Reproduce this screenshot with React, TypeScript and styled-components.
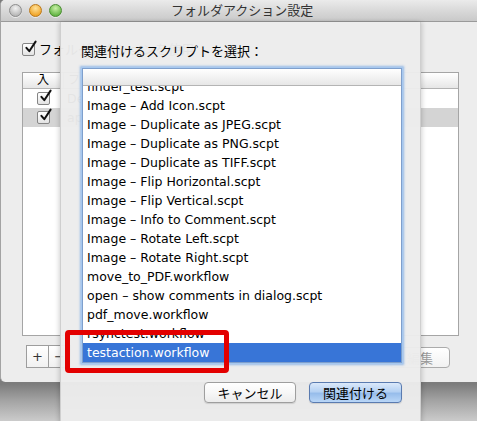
import * as React from "react";
import styled, { createGlobalStyle } from "styled-components";

const FONT = `"DejaVu Sans", "Noto Sans CJK JP", sans-serif`;

const GlobalStyle = createGlobalStyle`
  html, body {
    margin: 0;
    padding: 0;
  }
  body {
    font-family: ${FONT};
    font-size: 13px;
    color: #000;
  }
`;

const scripts = [
  "finder_test.scpt",
  "Image – Add Icon.scpt",
  "Image – Duplicate as JPEG.scpt",
  "Image – Duplicate as PNG.scpt",
  "Image – Duplicate as TIFF.scpt",
  "Image – Flip Horizontal.scpt",
  "Image – Flip Vertical.scpt",
  "Image – Info to Comment.scpt",
  "Image – Rotate Left.scpt",
  "Image – Rotate Right.scpt",
  "move_to_PDF.workflow",
  "open – show comments in dialog.scpt",
  "pdf_move.workflow",
  "rsynctest.workflow",
  "testaction.workflow",
];

const CheckMark = () => (
  <svg width="15" height="15" viewBox="0 0 15 15">
    <path
      d="M3.4 7.8 L6.3 11.2 L12.6 1.6"
      fill="none"
      stroke="#111"
      strokeWidth="2"
      strokeLinecap="round"
      strokeLinejoin="round"
    />
  </svg>
);

const CheckBox = () => (
  <CheckFrame>
    <CheckGlyph>
      <CheckMark />
    </CheckGlyph>
  </CheckFrame>
);

const App = () => {
  return (
    <>
      <GlobalStyle />
      <Screen>
        <Window>
          <TitleBar>
            <Lights>
              <Light $tone="gray" />
              <Light $tone="orange" />
              <Light $tone="green" />
            </Lights>
            <Title>フォルダアクション設定</Title>
          </TitleBar>
          <WindowBody>
            <CheckRow>
              <CheckBox />
              <span>フォルダアクションを使用</span>
            </CheckRow>
            <FolderTable>
              <TableHeader>
                <HeadCell $w={40}>入</HeadCell>
                <HeadCell $left>フォルダ</HeadCell>
              </TableHeader>
              <TableRow>
                <ToggleCell>
                  <CheckBox />
                </ToggleCell>
                <NameCell>Desktop</NameCell>
              </TableRow>
              <TableRow $selected>
                <ToggleCell>
                  <CheckBox />
                </ToggleCell>
                <NameCell>applescript</NameCell>
              </TableRow>
            </FolderTable>
            <BottomBar>
              <SegGroup>
                <SegButton>+</SegButton>
                <SegButton>−</SegButton>
              </SegGroup>
              <EditButton>編集</EditButton>
            </BottomBar>
          </WindowBody>
        </Window>

        <Sheet>
          <SheetLabel>関連付けるスクリプトを選択：</SheetLabel>
          <ListBox>
            <ListHeader />
            <ListBody>
              <ListRows>
                {scripts.map((s, i) => (
                  <ListRow key={s} $selected={i === scripts.length - 1}>
                    {s}
                  </ListRow>
                ))}
              </ListRows>
            </ListBody>
          </ListBox>
          <SheetButtons>
            <PushButton>キャンセル</PushButton>
            <PushButton $primary>関連付ける</PushButton>
          </SheetButtons>
        </Sheet>

        <Highlight />
      </Screen>
    </>
  );
};

export default App;

const Screen = styled.div`
  position: relative;
  width: 477px;
  height: 421px;
  overflow: hidden;
  background: linear-gradient(
    to bottom,
    #7c7c7c 0,
    #7c7c7c 384px,
    #a2a2a2 400px,
    #cbcbcb 421px
  );
`;

const Window = styled.div`
  width: 520px;
  height: 382px;
  background: #ededed;
  border-left: 1px solid #a3a3a3;
  border-radius: 5px;
  overflow: hidden;
  box-sizing: border-box;
`;

const TitleBar = styled.div`
  position: relative;
  display: flex;
  align-items: center;
  height: 22px;
  box-sizing: border-box;
  background: linear-gradient(to bottom, #ebebeb 0%, #d9d9d9 50%, #c9c9c9 100%);
  border-bottom: 1px solid #9a9a9a;
`;

const Lights = styled.div`
  display: flex;
  gap: 7px;
  padding-left: 8px;
`;

const toneMap = {
  gray: ["#f2f2f2", "#b8b8b8", "#8d8d8d"],
  orange: ["#ffe29a", "#f0a52a", "#b9781c"],
  green: ["#c9f0a6", "#64b646", "#4a8b32"],
};

const Light = styled.div<{ $tone: keyof typeof toneMap }>`
  width: 13px;
  height: 13px;
  border-radius: 50%;
  box-sizing: border-box;
  border: 1px solid ${(p) => toneMap[p.$tone][2]};
  background: radial-gradient(
    circle at 50% 30%,
    ${(p) => toneMap[p.$tone][0]} 0%,
    ${(p) => toneMap[p.$tone][1]} 75%
  );
  box-shadow: 0 1px 0 rgba(255, 255, 255, 0.6);
`;

const Title = styled.div`
  position: absolute;
  left: 170px;
  top: 3px;
  font-size: 13px;
  line-height: 16px;
  color: #333;
`;

const WindowBody = styled.div`
  display: flex;
  flex-direction: column;
  padding: 21px 0 0 21px;
`;

const CheckRow = styled.div`
  display: flex;
  align-items: center;
  gap: 4px;
  height: 13px;
  line-height: 13px;
`;

const CheckFrame = styled.div`
  position: relative;
  width: 13px;
  height: 13px;
  box-sizing: border-box;
  border: 1px solid #858585;
  border-radius: 2px;
  background: linear-gradient(to bottom, #ffffff 0%, #f2f2f2 50%, #e2e2e2 100%);
  flex-shrink: 0;
`;

const CheckGlyph = styled.div`
  position: absolute;
  left: 0px;
  top: -4px;
  line-height: 0;
`;

const FolderTable = styled.div`
  margin-top: 16px;
  width: 437px;
  height: 264px;
  box-sizing: border-box;
  border: 1px solid #a5a5a5;
  background: #fff;
`;

const TableHeader = styled.div`
  display: flex;
  height: 16px;
  box-sizing: border-box;
  background: linear-gradient(to bottom, #ffffff 0%, #f3f3f3 50%, #e6e6e6 100%);
  border-bottom: 1px solid #b3b3b3;
`;

const HeadCell = styled.div<{ $w?: number; $left?: boolean }>`
  width: ${(p) => (p.$w ? `${p.$w}px` : "auto")};
  flex: ${(p) => (p.$w ? "none" : "1")};
  text-align: ${(p) => (p.$left ? "left" : "center")};
  padding-left: ${(p) => (p.$left ? "4px" : "0")};
  font-size: 12px;
  line-height: 15px;
  border-right: ${(p) => (p.$w ? "1px solid #c8c8c8" : "none")};
`;

const TableRow = styled.div<{ $selected?: boolean }>`
  display: flex;
  align-items: center;
  height: 19px;
  background: ${(p) => (p.$selected ? "#d4d4d4" : "#fff")};
`;

const ToggleCell = styled.div`
  width: 40px;
  display: flex;
  justify-content: center;
`;

const NameCell = styled.div`
  padding-left: 4px;
  font-size: 12.5px;
`;

const BottomBar = styled.div`
  display: flex;
  align-items: flex-start;
  justify-content: space-between;
  width: 437px;
  margin-top: 9px;
`;

const SegGroup = styled.div`
  display: flex;
  margin-left: 5px;
`;

const SegButton = styled.div`
  width: 23px;
  height: 23px;
  box-sizing: border-box;
  border: 1px solid #9d9d9d;
  margin-left: -1px;
  background: linear-gradient(to bottom, #ffffff 0%, #f1f1f1 100%);
  display: flex;
  align-items: center;
  justify-content: center;
  font-size: 13px;
  color: #333;
`;

const EditButton = styled.div`
  margin-top: 2px;
  margin-right: 9px;
  width: 60px;
  height: 21px;
  box-sizing: border-box;
  border: 1px solid #ababab;
  border-radius: 4px;
  background: linear-gradient(to bottom, #ffffff 0%, #f2f2f2 100%);
  display: flex;
  align-items: center;
  justify-content: center;
  color: #9a9a9a;
`;

const Sheet = styled.div`
  position: absolute;
  left: 60px;
  top: 22px;
  width: 361px;
  height: 410px;
  box-sizing: border-box;
  padding: 22px 20px 0 21px;
  background: rgba(236, 236, 236, 0.965);
  border-left: 1px solid #cfcfcf;
  border-right: 1px solid #cfcfcf;
  box-shadow: -2px 0 4px rgba(0, 0, 0, 0.12), 2px 0 4px rgba(0, 0, 0, 0.12);
  display: flex;
  flex-direction: column;
`;

const SheetLabel = styled.div`
  height: 16px;
  line-height: 16px;
  font-size: 13px;
  margin-bottom: 8px;
  margin-left: -1px;
`;

const ListBox = styled.div`
  width: 320px;
  height: 295px;
  box-sizing: border-box;
  border: 1px solid #7f9fcc;
  background: #fff;
  box-shadow: 0 0 0 1px #a6c8ef, 0 0 2px 2px rgba(122, 170, 230, 0.75);
  display: flex;
  flex-direction: column;
`;

const ListHeader = styled.div`
  height: 17px;
  flex-shrink: 0;
  box-sizing: border-box;
  background: linear-gradient(to bottom, #ffffff 0%, #f3f3f3 50%, #e7e7e7 100%);
  border-bottom: 1px solid #b4b4b4;
`;

const ListBody = styled.div`
  flex: 1;
  overflow: hidden;
`;

const ListRows = styled.div`
  margin-top: -9px;
`;

const ListRow = styled.div<{ $selected?: boolean }>`
  height: 19px;
  line-height: 19px;
  padding-left: 4px;
  font-size: 12.5px;
  white-space: nowrap;
  background: ${(p) => (p.$selected ? "#3875d7" : "transparent")};
  color: ${(p) => (p.$selected ? "#fff" : "#000")};
`;

const SheetButtons = styled.div`
  display: flex;
  justify-content: flex-end;
  gap: 13px;
  width: 320px;
  margin-top: 19px;
`;

const PushButton = styled.div<{ $primary?: boolean }>`
  width: ${(p) => (p.$primary ? "93px" : "92px")};
  height: 21px;
  box-sizing: border-box;
  border-radius: 4px;
  display: flex;
  align-items: center;
  justify-content: center;
  font-size: 13px;
  border: 1px solid ${(p) => (p.$primary ? "#5a7bb0" : "#9e9e9e")};
  background: ${(p) =>
    p.$primary
      ? "linear-gradient(to bottom, #dbe9fa 0%, #b5d1f3 45%, #97bdeb 55%, #b9d6f7 100%)"
      : "linear-gradient(to bottom, #ffffff 0%, #f7f7f7 50%, #ececec 100%)"};
  box-shadow: 0 1px 1px rgba(0, 0, 0, 0.12);
`;

const Highlight = styled.div`
  position: absolute;
  left: 65px;
  top: 330px;
  width: 164px;
  height: 43px;
  box-sizing: border-box;
  border: 5px solid #e30000;
  border-radius: 4px;
`;
